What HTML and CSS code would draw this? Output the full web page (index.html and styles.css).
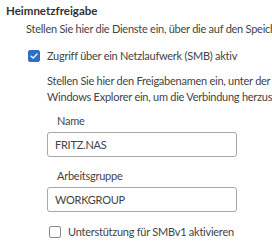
FILE: index.html
```html
<!DOCTYPE html>
<html lang="de">
<head>
<meta charset="utf-8">
<link rel="stylesheet" href="styles.css">
</head>
<body>
<div class="page">
  <h2 class="title">Heimnetzfreigabe</h2>
  <p class="intro">Stellen Sie hier die Dienste ein, über die auf den Speicher zugegriffen werden kann.</p>
  <div class="option">
    <label class="check">
      <span class="box checked"><svg viewBox="0 0 12 12" width="12" height="12"><path d="M2.6 6.2 L5 8.5 L9.6 3.6" fill="none" stroke="#fff" stroke-width="1.6" stroke-linecap="round" stroke-linejoin="round"/></svg></span>
      <span class="label">Zugriff über ein Netzlaufwerk (SMB) aktiv</span>
    </label>
    <div class="sub">
      <p class="desc">Stellen Sie hier den Freigabenamen ein, unter der der Speicher im<br>Windows Explorer ein, um die Verbindung herzustellen.</p>
      <div class="field first">
        <div class="field-label">Name</div>
        <div class="input">FRITZ.NAS</div>
      </div>
      <div class="field">
        <div class="field-label">Arbeitsgruppe</div>
        <div class="input">WORKGROUP</div>
      </div>
      <label class="check small">
        <span class="box"></span>
        <span class="label">Unterstützung für SMBv1 aktivieren</span>
      </label>
    </div>
  </div>
</div>
</body>
</html>
```
FILE: styles.css
```css
html, body {
  margin: 0;
  padding: 0;
  overflow: hidden;
  background: #fff;
}
body {
  font-family: Lato, "Open Sans", sans-serif;
  font-size: 11px;
  letter-spacing: -0.25px;
  color: #444;
}
.page {
  width: 600px;
  padding: 4px 0 0 6px;
}
.title {
  margin: 0;
  font-size: 11.5px;
  font-weight: bold;
  letter-spacing: 0;
  color: #333;
  line-height: 14px;
}
.intro {
  margin: 3px 0 0 20px;
  line-height: 15px;
  white-space: nowrap;
}
.option {
  margin: 12px 0 0 22px;
}
.check {
  display: flex;
  align-items: center;
  gap: 7px;
}
.box {
  width: 12px;
  height: 12px;
  box-sizing: border-box;
  border: 1px solid #8a8a8a;
  border-radius: 2px;
  display: flex;
  align-items: center;
  justify-content: center;
  flex: none;
}
.box.checked {
  background: #2f6fc7;
  border-color: #2f6fc7;
}
.label {
  line-height: 15px;
}
.sub {
  padding-left: 19px;
}
.desc {
  margin: 10px 0 0;
  line-height: 16px;
  white-space: nowrap;
}
.field {
  width: 190px;
  margin-top: 11px;
}
.field.first {
  margin-top: 8px;
}
.field-label {
  padding-left: 10px;
  line-height: 15px;
}
.input {
  margin-top: 4px;
  height: 25px;
  box-sizing: border-box;
  border: 1px solid #a8a8a8;
  border-radius: 3px;
  padding: 0 7px;
  line-height: 23px;
  color: #444;
}
.check.small {
  margin: 12px 0 0 2px;
}
```
